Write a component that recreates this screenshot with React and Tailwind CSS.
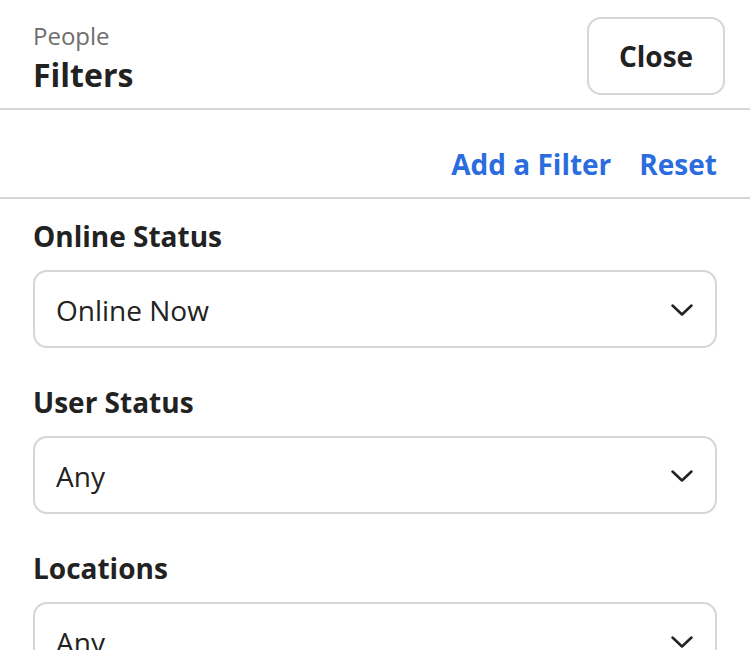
import React from "react";

const Chevron = () => (
  <svg width="22" height="12" viewBox="0 0 22 12" fill="none">
    <path d="M1.5 1.5L11 10.5L20.5 1.5" stroke="#222" strokeWidth="2.5" strokeLinecap="round" strokeLinejoin="round" />
  </svg>
);

const filters = [
  { label: "Online Status", value: "Online Now" },
  { label: "User Status", value: "Any" },
  { label: "Locations", value: "Any" },
];

const App = () => {
  return (
    <div
      className="w-[750px] h-[650px] overflow-hidden bg-white text-[#222]"
      style={{ fontFamily: '"Open Sans", "Noto Sans", sans-serif' }}
    >
      <div className="flex items-start justify-between pl-[33px] pr-[25px] h-[110px] border-b-2 border-[#d6d6d6]">
        <div className="pt-[20px]">
          <p className="text-[24px] leading-[32px] text-[#6e6e6e]">People</p>
          <h1 className="text-[32px] leading-[46px] font-bold">Filters</h1>
        </div>
        <button className="mt-[17px] w-[138px] h-[78px] rounded-[14px] border-2 border-[#d6d6d6] text-[28px] font-bold">
          Close
        </button>
      </div>

      <div className="flex items-center justify-end gap-[28px] pr-[33px] pt-[20px] h-[89px] border-b-2 border-[#d6d6d6]">
        <button className="text-[28px] font-bold text-[#2b6cde]">Add a Filter</button>
        <button className="text-[28px] font-bold text-[#2b6cde]">Reset</button>
      </div>

      <div className="px-[33px] pt-[19px] flex flex-col gap-[36px]">
        {filters.map((f) => (
          <div key={f.label}>
            <p className="text-[28px] leading-[36px] font-bold mb-[16px]">{f.label}</p>
            <div className="flex items-center justify-between h-[78px] pl-[21px] pr-[22px] pt-[2px] rounded-[14px] border-2 border-[#d6d6d6]">
              <span className="text-[28px]">{f.value}</span>
              <Chevron />
            </div>
          </div>
        ))}
      </div>
    </div>
  );
};

export default App;
